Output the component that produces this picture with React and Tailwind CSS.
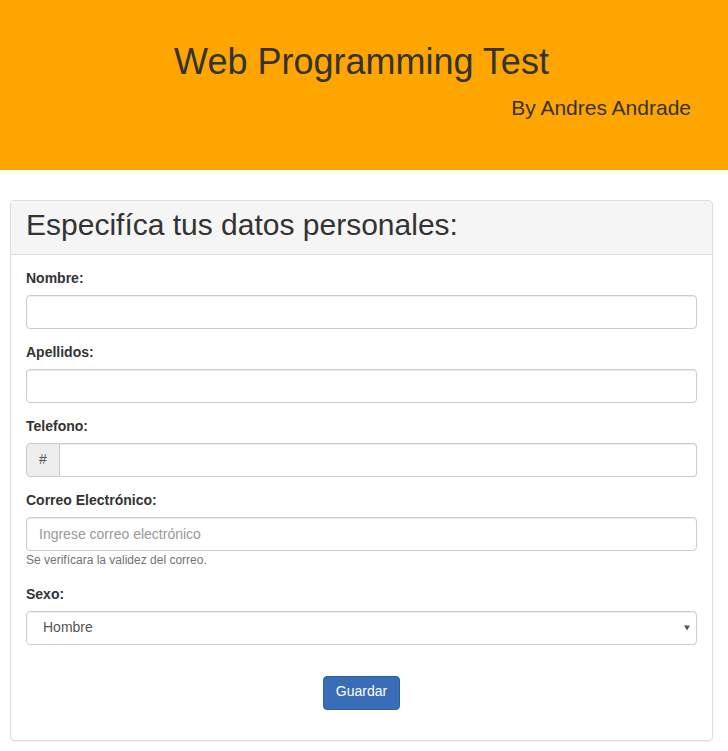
export default function App() {
  const font = { fontFamily: '"Liberation Sans", Arial, Helvetica, sans-serif' };
  const inputCls = "block w-full h-[34px] px-[12px] border border-[#ccc] rounded-[4px] shadow-[inset_0_1px_1px_rgba(0,0,0,0.075)] text-[#555] outline-none";
  return (
    <div className="min-h-[751px] bg-white text-[#333] text-[14px] leading-[20px]" style={font}>
      <header className="bg-[#ffa500] h-[170px] pt-[42px] px-[37px]">
        <h1 className="text-[36px] leading-[1.1] text-center text-[#333] mr-[5px]">Web Programming Test</h1>
        <h2 className="text-[21px] leading-[1.1] text-right text-[#333] mt-[14px]">By Andres Andrade</h2>
      </header>
      <div className="pl-[10px] pr-[15px] pt-[30px] pb-[10px]">
        <div className="border border-[#ddd] rounded-[4px] shadow-[0_1px_1px_rgba(0,0,0,0.05)]">
          <div className="bg-[#f5f5f5] border-b border-[#ddd] rounded-t-[3px] px-[15px] pt-[7px] pb-[13px]">
            <h3 className="text-[30px] leading-[33px] text-[#333]">Especifíca tus datos personales:</h3>
          </div>
          <form className="p-[15px]" onSubmit={(e) => e.preventDefault()}>
            <div className="mb-[15px]">
              <label className="block font-bold leading-[16px] mb-[9px]">Nombre:</label>
              <input type="text" className={inputCls} />
            </div>
            <div className="mb-[15px]">
              <label className="block font-bold leading-[16px] mb-[9px]">Apellidos:</label>
              <input type="text" className={inputCls} />
            </div>
            <div className="mb-[15px]">
              <label className="block font-bold leading-[16px] mb-[9px]">Telefono:</label>
              <div className="flex h-[34px]">
                <span className="flex items-center justify-center w-[34px] bg-[#eee] border border-[#ccc] rounded-l-[4px] text-[#555] pb-[3px]">#</span>
                <input type="text" className="flex-1 min-w-0 h-[34px] px-[12px] border border-l-0 border-[#ccc] rounded-r-[4px] shadow-[inset_0_1px_1px_rgba(0,0,0,0.075)] text-[#555] outline-none" />
              </div>
            </div>
            <div className="mb-[17px]">
              <label className="block font-bold leading-[16px] mb-[9px]">Correo Electrónico:</label>
              <input type="email" placeholder="Ingrese correo electrónico" className={inputCls + " placeholder:text-[#999]"} />
              <p className="text-[12px] leading-[17px] text-[#737373] mt-[1px]">Se verifícara la validez del correo.</p>
            </div>
            <div>
              <label className="block font-bold leading-[16px] mb-[9px]">Sexo:</label>
              <div className="relative">
                <select className="block w-full h-[34px] pl-[16px] pr-[24px] pb-[2px] border border-[#ccc] rounded-[4px] shadow-[inset_0_1px_1px_rgba(0,0,0,0.075)] text-[#555] bg-white appearance-none outline-none">
                  <option>Hombre</option>
                  <option>Mujer</option>
                </select>
                <svg className="absolute right-[6px] top-[13px] pointer-events-none" width="8" height="8" viewBox="0 0 8 8">
                  <path d="M1 1.5 H7 L4 6.5 Z" fill="#555" />
                </svg>
              </div>
            </div>
            <div className="flex justify-center pt-[31px] pb-[15px]">
              <button type="submit" className="h-[34px] px-[12px] pb-[4px] bg-[#3a6db8] border border-[#2e5f9f] rounded-[4px] text-white leading-[20px]">Guardar</button>
            </div>
          </form>
        </div>
      </div>
    </div>
  );
}
